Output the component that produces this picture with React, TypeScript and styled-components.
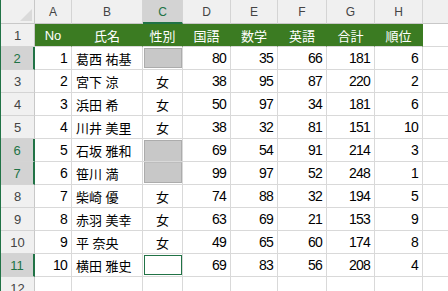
import React from "react";
import styled, { createGlobalStyle } from "styled-components";

const GlobalStyle = createGlobalStyle`
  html, body {
    margin: 0;
    padding: 0;
    background: #ffffff;
    overflow: hidden;
  }
`;

const GREEN = "#217346";

const Frame = styled.div`
  width: 448px;
  height: 291px;
  overflow: hidden;
  border-left: 1px solid ${GREEN};
  box-sizing: border-box;
  font-family: "Liberation Sans", "Noto Sans CJK JP", sans-serif;
`;

const Sheet = styled.div`
  display: grid;
  grid-template-columns: 34px 37px 71px 40px 48px 47px 49px 48px 48px 60px;
  grid-template-rows: 24px;
  grid-auto-rows: 23px;
`;

const Corner = styled.div`
  background: #f0f0f0;
  border-right: 1px solid #c8c8c8;
  border-bottom: 1px solid #c8c8c8;
  box-sizing: border-box;
  display: flex;
  align-items: flex-end;
  justify-content: flex-end;
  padding: 0 2px 2px 0;
`;

const ColHead = styled.div<{ $active?: boolean }>`
  background: ${(p) => (p.$active ? "#d3d3d3" : "#f0f0f0")};
  color: ${(p) => (p.$active ? GREEN : "#444444")};
  border-right: 1px solid #d4d4d4;
  border-bottom: ${(p) => (p.$active ? `2px solid ${GREEN}` : "1px solid #c8c8c8")};
  box-sizing: border-box;
  display: flex;
  align-items: center;
  justify-content: center;
  font-size: 12px;
  padding-top: ${(p) => (p.$active ? "1px" : "0")};
`;

const RowHead = styled.div<{ $active?: boolean }>`
  background: ${(p) => (p.$active ? "#d3d3d3" : "#f0f0f0")};
  color: ${(p) => (p.$active ? GREEN : "#444444")};
  border-right: ${(p) => (p.$active ? `2px solid ${GREEN}` : "1px solid #c8c8c8")};
  border-bottom: 1px solid #d4d4d4;
  box-sizing: border-box;
  display: flex;
  align-items: center;
  justify-content: center;
  font-size: 13px;
`;

const Cell = styled.div<{ $align?: string }>`
  border-right: 1px solid #d9d9d9;
  border-bottom: 1px solid #d9d9d9;
  box-sizing: border-box;
  display: flex;
  align-items: center;
  justify-content: ${(p) => p.$align || "flex-end"};
  padding: 0 4px;
  color: #000000;
  font-size: 14px;
  letter-spacing: -0.8px;
  white-space: nowrap;
  overflow: hidden;
`;

const NameCell = styled(Cell)`
  font-size: 13px;
  letter-spacing: 0;
`;

const HeadCell = styled.div`
  background: #3b7b22;
  color: #ffffff;
  border-right: 1px solid #3b7b22;
  border-bottom: 1px solid #d9d9d9;
  box-sizing: border-box;
  display: flex;
  align-items: center;
  justify-content: center;
  font-size: 13px;
`;

const MarkCell = styled.div<{ $part: "single" | "top" | "bottom" | "active" }>`
  border-right: 1px solid #d9d9d9;
  border-bottom: 1px solid #d9d9d9;
  box-sizing: border-box;
  display: flex;
  padding: ${(p) =>
    p.$part === "top" ? "1px 0 0 1px" : p.$part === "bottom" ? "0 0 1px 1px" : "1px 0 1px 1px"};
`;

const Mark = styled.div<{ $part: "single" | "top" | "bottom" | "active" }>`
  flex: 1;
  box-sizing: border-box;
  background: ${(p) => (p.$part === "active" ? "#ffffff" : "#c8c8c8")};
  border: 1px solid ${(p) => (p.$part === "active" ? GREEN : "#acacac")};
  ${(p) => (p.$part === "top" ? "border-bottom: none;" : "")}
  ${(p) => (p.$part === "bottom" ? "border-top: 1px solid #bdbdbd;" : "")}
`;

type Mk = "single" | "top" | "bottom" | "active" | null;

interface Row {
  no: number;
  name: string;
  sex: string;
  mark: Mk;
  scores: number[];
}

const rows: Row[] = [
  { no: 1, name: "葛西 祐基", sex: "", mark: "single", scores: [80, 35, 66, 181, 6] },
  { no: 2, name: "宮下 涼", sex: "女", mark: null, scores: [38, 95, 87, 220, 2] },
  { no: 3, name: "浜田 希", sex: "女", mark: null, scores: [50, 97, 34, 181, 6] },
  { no: 4, name: "川井 美里", sex: "女", mark: null, scores: [38, 32, 81, 151, 10] },
  { no: 5, name: "石坂 雅和", sex: "", mark: "top", scores: [69, 54, 91, 214, 3] },
  { no: 6, name: "笹川 満", sex: "", mark: "bottom", scores: [99, 97, 52, 248, 1] },
  { no: 7, name: "柴崎 優", sex: "女", mark: null, scores: [74, 88, 32, 194, 5] },
  { no: 8, name: "赤羽 美幸", sex: "女", mark: null, scores: [63, 69, 21, 153, 9] },
  { no: 9, name: "平 奈央", sex: "女", mark: null, scores: [49, 65, 60, 174, 8] },
  { no: 10, name: "横田 雅史", sex: "", mark: "active", scores: [69, 83, 56, 208, 4] },
];

const letters = ["A", "B", "C", "D", "E", "F", "G", "H", ""];
const heads = ["No", "氏名", "性別", "国語", "数学", "英語", "合計", "順位"];

const App = () => {
  return (
    <Frame>
      <GlobalStyle />
      <Sheet>
        <Corner>
          <svg width="12" height="12" viewBox="0 0 12 12">
            <polygon points="12,0 12,12 0,12" fill="#dadada" />
          </svg>
        </Corner>
        {letters.map((l, i) => (
          <ColHead key={i} $active={l === "C"}>
            {l}
          </ColHead>
        ))}

        <RowHead>1</RowHead>
        {heads.map((h) => (
          <HeadCell key={h}>{h}</HeadCell>
        ))}
        <Cell />

        {rows.map((r, i) => (
          <React.Fragment key={r.no}>
            <RowHead $active={r.mark !== null}>{i + 2}</RowHead>
            <Cell>{r.no}</Cell>
            <NameCell $align="flex-start">{r.name}</NameCell>
            {r.mark ? (
              <MarkCell $part={r.mark}>
                <Mark $part={r.mark} />
              </MarkCell>
            ) : (
              <NameCell $align="center">{r.sex}</NameCell>
            )}
            {r.scores.map((s, j) => (
              <Cell key={j}>{s}</Cell>
            ))}
            <Cell />
          </React.Fragment>
        ))}

        <RowHead>12</RowHead>
        {letters.map((_, i) => (
          <Cell key={i} />
        ))}
      </Sheet>
    </Frame>
  );
};

export default App;
